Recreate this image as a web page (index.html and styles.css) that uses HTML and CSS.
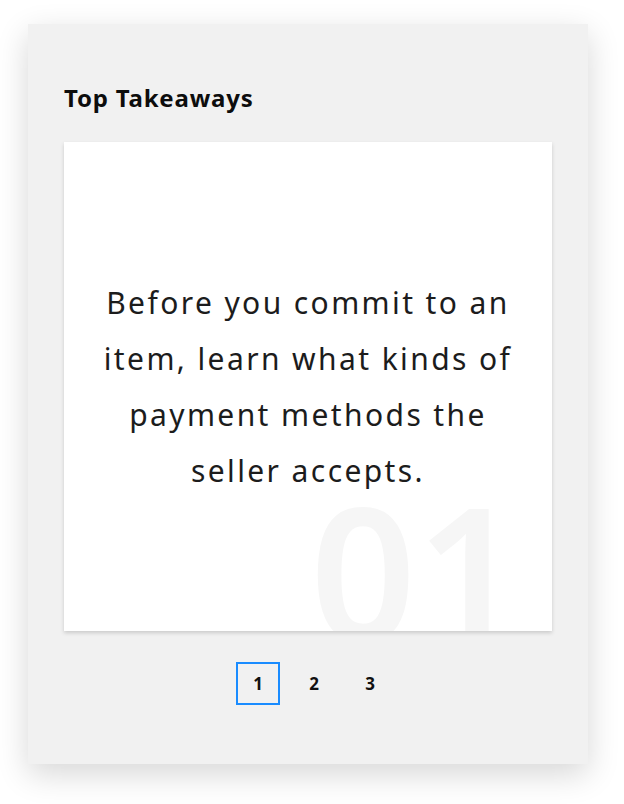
FILE: index.html
```html
<!DOCTYPE html>
<html lang="en">

<head>
    <meta charset="UTF-8">
    <meta name="viewport" content="width=device-width, initial-scale=1.0">
    <title>Top Takeaways</title>
    <link rel="stylesheet" href="styles.css">
</head>

<body>
    <section class="takeaways">
        <h3 class="takeaways-title">Top Takeaways</h3>
        <div class="slide">
            <p class="slide-text">Before you commit to an<br>item, learn what kinds of<br>payment methods the<br>seller accepts.</p>
            <span class="slide-number">01</span>
        </div>
        <!-- Slide pager -->
        <nav class="pager">
            <button class="pager-item active">1</button>
            <button class="pager-item">2</button>
            <button class="pager-item">3</button>
        </nav>
    </section>
</body>

</html>
```

FILE: styles.css
```css
/* General Styles */
body {
    font-family: "Noto Sans", sans-serif;
    margin: 0;
    padding: 24px 0 40px;
    background: #fff;
    color: #111;
}

.takeaways {
    width: 560px;
    margin: 0 0 0 28px;
    box-sizing: border-box;
    padding: 62px 36px 59px;
    background: #f1f1f1;
    box-shadow: 0 10px 30px rgba(0, 0, 0, 0.16);
}

.takeaways-title {
    margin: 0 0 32px;
    font-size: 24px;
    line-height: 24px;
    font-weight: 700;
    letter-spacing: 0.8px;
    color: #0d0d0d;
}

/* Slide */
.slide {
    position: relative;
    height: 489px;
    display: flex;
    align-items: center;
    justify-content: center;
    background: #fff;
    box-shadow: 0 2px 4px rgba(0, 0, 0, 0.16);
    overflow: hidden;
}

.slide-text {
    position: relative;
    z-index: 1;
    margin: 0;
    font-size: 30px;
    line-height: 56px;
    letter-spacing: 2.4px;
    text-align: center;
    color: #1c1c1c;
}

.slide-number {
    position: absolute;
    top: 335px;
    right: 30px;
    font-size: 185px;
    font-weight: 600;
    line-height: 1;
    color: #f6f6f6;
}

/* Pager */
.pager {
    display: flex;
    justify-content: center;
    gap: 12px;
    margin-top: 31px;
    padding-left: 12px;
}

.pager-item {
    width: 44px;
    height: 43px;
    padding: 0;
    border: 2px solid transparent;
    background: transparent;
    font-family: inherit;
    font-size: 17px;
    font-weight: 700;
    color: #111;
}

.pager-item.active {
    border-color: #1a8cff;
}
```
